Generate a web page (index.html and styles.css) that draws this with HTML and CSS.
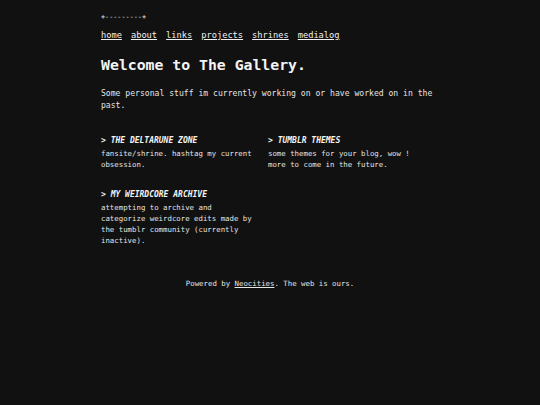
FILE: index.html
```html
<!DOCTYPE html>
<html lang="en">
<head>
<meta charset="utf-8">
<title>The Gallery</title>
<link rel="stylesheet" href="styles.css">
</head>
<body>
<div class="page">
  <div class="deco">+---------+</div>
  <nav class="nav">
    <a href="#">home</a>
    <a href="#">about</a>
    <a href="#">links</a>
    <a href="#">projects</a>
    <a href="#">shrines</a>
    <a href="#">medialog</a>
  </nav>
  <h1 class="title">Welcome to The Gallery.</h1>
  <p class="intro">Some personal stuff im currently working on or have worked on in the past.</p>
  <div class="grid">
    <div class="card">
      <div class="card-title">&gt; THE DELTARUNE ZONE</div>
      <div class="card-text">fansite/shrine. hashtag my current obsession.</div>
    </div>
    <div class="card">
      <div class="card-title">&gt; TUMBLR THEMES</div>
      <div class="card-text">some themes for your blog, wow ! more to come in the future.</div>
    </div>
    <div class="card">
      <div class="card-title">&gt; MY WEIRDCORE ARCHIVE</div>
      <div class="card-text">attempting to archive and categorize weirdcore edits made by the tumblr community (currently inactive).</div>
    </div>
  </div>
  <footer class="footer">Powered by <a href="#">Neocities</a>. The web is ours.</footer>
</div>
</body>
</html>
```

FILE: styles.css
```css
html, body {
  margin: 0;
  padding: 0;
  background: #111111;
}
body {
  font-family: "DejaVu Sans Mono", monospace;
  color: #e4e4e4;
}
.page {
  width: 338px;
  margin: 0 auto;
  padding-top: 12px;
}
.deco {
  font-size: 6.8px;
  line-height: 10px;
  color: #e4e4e4;
}
.nav {
  display: flex;
  gap: 9px;
  margin-top: 7px;
  font-size: 8.7px;
  line-height: 12px;
}
.nav a {
  color: #f0f0f0;
  text-decoration: underline;
}
.title {
  margin: 15px 0 0;
  font-size: 14.8px;
  line-height: 18px;
  font-weight: bold;
  color: #f4f4f4;
}
.intro {
  margin: 13px 0 0;
  font-size: 8.1px;
  line-height: 12px;
}
.grid {
  display: grid;
  grid-template-columns: 167px 1fr;
  row-gap: 19px;
  margin-top: 24px;
}
.card {
  padding-right: 12px;
}
.card-title {
  font-size: 8px;
  line-height: 12px;
  font-weight: bold;
  font-style: italic;
  color: #f4f4f4;
  margin-bottom: 1px;
}
.card-text {
  font-size: 7.37px;
  line-height: 11px;
}
.footer {
  margin-top: 32px;
  text-align: center;
  font-size: 7.37px;
  line-height: 11px;
}
.footer a {
  color: #e4e4e4;
  text-decoration: underline;
}
```
